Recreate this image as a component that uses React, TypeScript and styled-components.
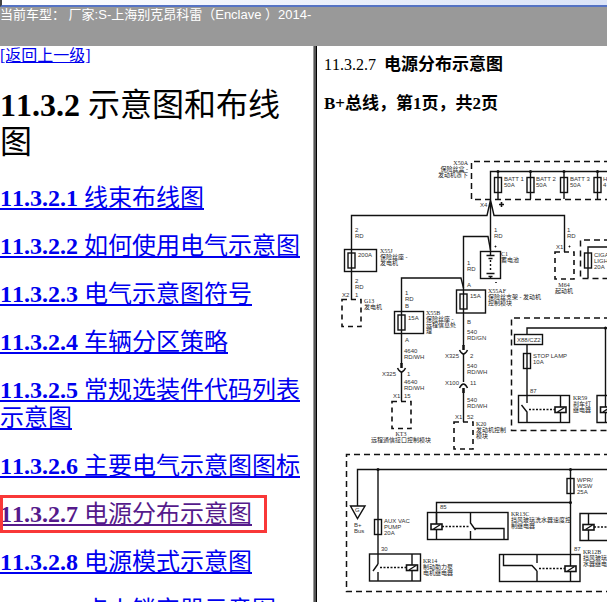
import React from "react";
import styled, { createGlobalStyle } from "styled-components";

const GlobalStyle = createGlobalStyle`
  * { box-sizing: border-box; }
  body { margin: 0; background: #fff; color: #000; }
`;

const Page = styled.div`
  display: flex;
  flex-direction: column;
  height: 100vh;
  overflow: hidden;
  font-family: "Liberation Serif", "Noto Sans CJK SC", serif;
  font-kerning: none;
`;

const WindowEdge = styled.div`
  height: 7px;
  flex: none;
  border-bottom: 2px solid #5573c4;
  border-left: 2px solid #444;
  background: linear-gradient(to right, #fff, #dbe4f8);
`;

const VehicleBar = styled.header`
  height: 39px;
  flex: none;
  background: #999;
  color: #fff;
  font: 13px/15px "Liberation Sans", "Noto Sans CJK SC", sans-serif;
  font-kerning: none;
  white-space: pre;
`;

const Frames = styled.div`
  flex: 1;
  min-height: 0;
  display: grid;
  grid-template-columns: minmax(0, 313fr) 4px minmax(0, 290fr);
`;

const Contents = styled.nav`
  overflow: hidden;
  padding-right: 8px;
`;

const Divider = styled.div`
  border-left: 1px solid #999;
  border-right: 1px solid #000;
  background: #555;
`;

const Document = styled.main`
  overflow: hidden;
  padding-left: 7px;
`;

const BackLink = styled.a`
  display: block;
  width: max-content;
  color: #00e;
  font-size: 16px;
  line-height: 20px;
`;

const ChapterTitle = styled.h1`
  margin: 21px 0 23px;
  font-size: 32px;
  line-height: 37px;
`;

const Name = styled.span`
  font-weight: 400;
`;

const TopicList = styled.ul`
  list-style: none;
  margin: 0;
  padding: 0;
  display: flex;
  flex-direction: column;
  gap: 20px;
`;

const Topic = styled.li<{ $current?: boolean }>`
  font-size: 24px;
  font-weight: 700;
  line-height: 28px;
  a { color: ${(p) => (p.$current ? "#551a8b" : "#00e")}; }
  ${(p) =>
    p.$current &&
    `width: 267px; margin: -5px 0; padding: 5px 0; outline: 3px solid #f93838; outline-offset: -3px;`}
`;

const SectionTitle = styled.h2`
  margin: 9px 0 0;
  font-size: 16px;
  font-weight: 400;
  line-height: 20px;
  display: flex;
  align-items: baseline;
  gap: 8px;
  strong { font-size: 17px; }
`;

const SheetTitle = styled.h3`
  margin: 19px 0 0;
  font-size: 17px;
  line-height: 20px;
`;

const Schematic = styled.svg`
  display: block;
  margin-top: 22px;
  width: 283px;
  height: 466px;
`;

const Label = styled.text`
  font: 6px "Liberation Sans", sans-serif;
  fill: #333;
`;

const PartLabel = styled.text`
  font: 6px "Liberation Serif", "Noto Sans CJK SC", serif;
  fill: #222;
`;

const topics: [string, string][] = [
  ["11.3.2.1", "线束布线图"],
  ["11.3.2.2", "如何使用电气示意图"],
  ["11.3.2.3", "电气示意图符号"],
  ["11.3.2.4", "车辆分区策略"],
  ["11.3.2.5", "常规选装件代码列表示意图"],
  ["11.3.2.6", "主要电气示意图图标"],
  ["11.3.2.7", "电源分布示意图"],
  ["11.3.2.8", "电源模式示意图"],
  ["11.3.2.9", "点火锁定器示意图"],
];

type LabelData = [number, number, string[]];

const wireLabels: LabelData[] = [
  [504, 181, ["BATT 1", "50A"]],
  [536, 181, ["BATT 2", "50A"]],
  [570, 181, ["BATT 3", "50A"]],
  [603, 181, ["H", "4"]],
  [480, 207, ["X4"]],
  [355, 232, ["2", "RD"]],
  [358, 257, ["200A"]],
  [355, 283, ["2", "RD"]],
  [342, 297, ["X2"]],
  [355, 297, ["1"]],
  [405, 295, ["1", "RD"]],
  [405, 308, ["B"]],
  [408, 320, ["15A"]],
  [405, 342, ["A"]],
  [404, 353, ["4640", "RD/WH"]],
  [382, 376, ["X325"]],
  [407, 376, ["1"]],
  [404, 384, ["4640", "RD/WH"]],
  [393, 398, ["X1"]],
  [404, 398, ["15"]],
  [467, 265, ["1", "RD"]],
  [494, 232, ["1", "RD"]],
  [567, 232, ["1", "RD"]],
  [556, 249, ["X1"]],
  [467, 287, ["A"]],
  [470, 298, ["15A"]],
  [467, 324, ["B"]],
  [467, 334, ["540", "RD/GN"]],
  [445, 358, ["X325"]],
  [470, 358, ["2"]],
  [467, 368, ["540", "RD/WH"]],
  [445, 385, ["X100"]],
  [470, 385, ["11"]],
  [467, 402, ["540", "RD/WH"]],
  [455, 419, ["X1"]],
  [467, 419, ["52"]],
  [594, 257, ["CIGA", "LIGH", "20A"]],
  [517, 342, ["X88/CZ2"]],
  [533, 358, ["STOP LAMP", "10A"]],
  [530, 393, ["87"]],
  [384, 523, ["AUX VAC", "PUMP", "20A"]],
  [381, 551, ["30"]],
  [354, 527, ["B+", "Bus"]],
  [355, 512, ["G"]],
  [440, 509, ["85"]],
  [577, 482, ["WPR/", "WSW", "25A"]],
  [574, 551, ["87"]],
];

const partLabels: LabelData[] = [
  [380, 253, ["X55J", "保险丝座 -", "发电机"]],
  [364, 303, ["G13", "发电机"]],
  [426, 315, ["X55B", "保险丝座 -", "远程信息处", "理"]],
  [501, 256, ["C1", "蓄电池"]],
  [488, 293, ["X55AF", "保险丝支架 - 发动机", "控制模块"]],
  [476, 426, ["K20", "发动机控制", "模块"]],
  [573, 400, ["KR59", "刹车灯", "继电器"]],
  [423, 563, ["KR14", "制动助力泵", "电机继电器"]],
  [511, 516, ["KR13C", "挡风玻璃洗水器速度控", "制继电器"]],
  [583, 554, ["KR12B", "挡风玻璃", "水器继电"]],
];

function Labels({ items, part }: { items: LabelData[]; part?: boolean }) {
  const Kind = part ? PartLabel : Label;
  return (
    <>
      {items.map(([x, y, lines], i) => (
        <Kind key={i}>
          {lines.map((line, n) => (
            <tspan key={n} x={x} y={y + n * 6}>{line}</tspan>
          ))}
        </Kind>
      ))}
    </>
  );
}

function Fuse({ x, y }: { x: number; y: number }) {
  return <rect x={x - 3.5} y={y} width="7" height="15" />;
}

function Coil({ x, y }: { x: number; y: number }) {
  return (
    <g>
      <rect x={x - 5.5} y={y - 2.5} width="11" height="5.5" fill="#fff" strokeWidth="1.6" />
      <path d={`M${x - 3} ${y + 2.5}l7 -4.5`} />
    </g>
  );
}

const connectors: [number, number, boolean][] = [
  [401.5, 368, false],
  [463.5, 350, false],
  [463.5, 388, true],
];

function PowerSchematic() {
  return (
    <Schematic viewBox="324 136 283 466" role="img" aria-label="电源分布示意图">
      <g fill="none" stroke="#111" strokeWidth="1.4">
        {/* Battery fuse block and feeds */}
        <path d="M490.5 252V171.5H607M351.5 300V215.5H487L490.5 200L494 215.5H564.5V252" />
        <path d="M498 171V199M530.5 171V199M564 171V199M597.5 171V199" />
        {[498, 530.5, 564, 597.5].map((x) => <Fuse key={x} x={x} y={177.5} />)}
        <path d="M499 204.5h5M501.5 202v5" strokeWidth="1.6" />
        <path d="M494.5 246.5h2M495.5 245.5v2M568.5 246.5h2M569.5 245.5v2M495 282.5h2" strokeWidth=".8" />

        {/* Generator branch */}
        <rect x="344.5" y="249.5" width="32" height="22" />
        <Fuse x={351.5} y={253} />

        {/* Battery */}
        <path d="M490.5 250L488 236.500H463.5V346M463.5 354V382M463.5 390V422" />
        <rect x="480.5" y="251.5" width="20" height="27" />
        <path d="M486.5 255.5h8M488.500 258.5h4M486.5 273.5h8M488.500 276.500h4M490.500 252v3M490.500 276v3" />
        <path d="M490.5 260v12" strokeDasharray="2 2" />

        {/* Telematics branch */}
        <path d="M401.5 364V278H461L463.5 288M401.5 372V401" />
        <rect x="394.5" y="311.5" width="29" height="22" />
        <Fuse x={401.5} y={315} />

        {/* Engine control branch */}
        <rect x="456.5" y="290" width="29" height="23" />
        <Fuse x={463.5} y={294} />

        {connectors.map(([x, y, up]) => (
          <g key={`${x}-${y}`}>
            <path d={`M${x - 4} ${y}Q${x} ${up ? y - 8 : y + 8} ${x + 4} ${y}`} strokeWidth="1.5" />
            <path d={`M${x} ${up ? y : y - 5}v5`} strokeWidth="2.5" />
          </g>
        ))}

        {/* Lighter fuse */}
        <path d="M607 247H588V278" />
        <Fuse x={588} y={253} />

        {/* Stop lamp relay */}
        <path d="M607 328H527V403M560.5 396V422.5M605.5 328V396" />
        <rect x="514.5" y="334.5" width="28" height="10" fill="#fff" />
        <Fuse x={527} y={353.5} />
        <rect x="518.5" y="395.5" width="51" height="27" />
        <path d="M521.5 405L527 412V422" />
        <path d="M529 409.5H555" strokeDasharray="2 1.5" />
        <Coil x={560.5} y={409.5} />
        <path d="M607 395.5H597V422.5H607M605.5 395V422" />
        <Coil x={606} y={409.5} />

        {/* Lower bus */}
        <path d="M357.5 506V469.5H607M378 469V564M570.5 469V581.5M436.5 529V502.5H570.5" />
        <path d="M350.5 506H365L357.5 518.5Z" />
        <Fuse x={378} y={519.5} />
        <Fuse x={570.5} y={478.5} />

        {/* Vacuum pump relay */}
        <rect x="369.5" y="554" width="51" height="27" />
        <path d="M378 564L373 571M378 572v9M412 554v27" />
        <path d="M380 567.5H407" strokeDasharray="2 1.5" />
        <Coil x={412} y={567.5} />

        {/* Washer speed relay */}
        <rect x="427.5" y="512.5" width="80.5" height="27" />
        <path d="M436.5 512v27M470.5 512v11l5 7M470.5 531v8M474 528.5h30v11" />
        <path d="M442 526.5H470" strokeDasharray="2 1.5" />
        <Coil x={436.5} y={526.5} />

        {/* Washer relay */}
        <rect x="499.5" y="554.5" width="80.5" height="27" />
        <path d="M503.5 555V565.5H532L537 571M537 555v8M537 571v10" />
        <path d="M539 568.5H565" strokeDasharray="2 1.5" />
        <Coil x={570.5} y={568.5} />
        <path d="M607 513.5H580V540.5H607M588.5 513v27" />
        <path d="M594 527H607" strokeDasharray="2 1.5" />
        <Coil x={588.5} y={527} />

        {/* Module outlines */}
        <g strokeDasharray="6 4" strokeWidth="1.5">
          <path d="M620 161.5H471.5V199.5H620M620 240H580.5V278.5H620" />
          <path d="M620 318H511.5V430.5H620M620 454.5H346.5V591.5H620" />
        </g>
        <g strokeDasharray="5 4" strokeWidth="1.6">
          <rect x="342" y="299.5" width="19" height="27" />
          <rect x="392" y="401.5" width="19" height="27" />
          <rect x="454" y="422" width="19" height="27" />
          <rect x="555" y="252" width="19" height="27" />
        </g>
      </g>
      <g fill="#111">
        <circle cx="498" cy="171.5" r="1.5" />
        <circle cx="530.5" cy="171.5" r="1.5" />
        <circle cx="564" cy="171.5" r="1.5" />
        <circle cx="597.5" cy="171.5" r="1.5" />
        <circle cx="605.5" cy="328" r="1.5" />
        <circle cx="378" cy="469.5" r="1.5" />
        <circle cx="570.5" cy="469.5" r="1.5" />
        <circle cx="570.5" cy="502.5" r="1.5" />
      </g>
      <Labels items={wireLabels} />
      <Labels items={partLabels} part />
      <PartLabel textAnchor="end">
        <tspan x="468" y="165">X50A</tspan>
        <tspan x="468" y="171">保险丝盒 -</tspan>
        <tspan x="468" y="177">发动机罩下</tspan>
      </PartLabel>
      <PartLabel textAnchor="middle">
        <tspan x="401" y="436">KT3</tspan>
        <tspan x="401" y="442">远程通信接口控制模块</tspan>
      </PartLabel>
      <PartLabel textAnchor="middle">
        <tspan x="564" y="287">M64</tspan>
        <tspan x="564" y="293">起动机</tspan>
      </PartLabel>
    </Schematic>
  );
}

export default function App() {
  return (
    <>
      <GlobalStyle />
      <Page lang="zh-CN">
        <WindowEdge />
        <VehicleBar>当前车型： 厂家:S-上海别克昂科雷（Enclave ）2014-</VehicleBar>
        <Frames>
          <Contents>
            <BackLink href="#back">[返回上一级]</BackLink>
            <ChapterTitle>11.3.2 <Name>示意图和布线图</Name></ChapterTitle>
            <TopicList>
              {topics.map(([number, name]) => (
                <Topic key={number} $current={number === "11.3.2.7"}>
                  <a href={`#${number}`}>{number} <Name>{name}</Name></a>
                </Topic>
              ))}
            </TopicList>
          </Contents>
          <Divider />
          <Document>
            <SectionTitle>11.3.2.7 <strong>电源分布示意图</strong></SectionTitle>
            <SheetTitle>B+总线，第1页，共2页</SheetTitle>
            <PowerSchematic />
          </Document>
        </Frames>
      </Page>
    </>
  );
}
